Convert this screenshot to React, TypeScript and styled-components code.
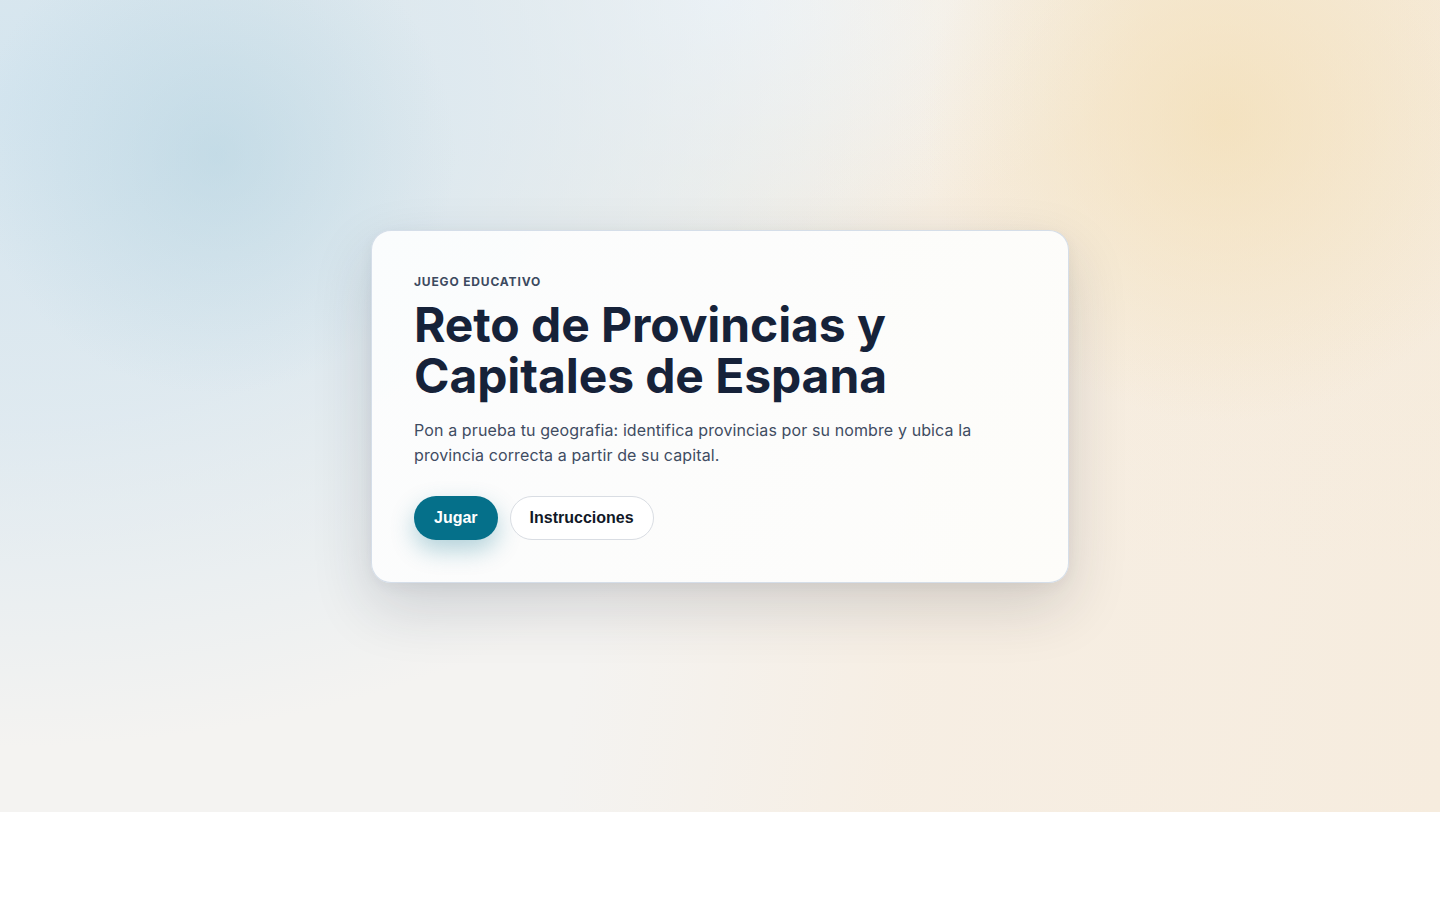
import React from "react";
import styled, { createGlobalStyle } from "styled-components";

const Global = createGlobalStyle`
  html, body { margin: 0; padding: 0; background: #ffffff; }
  body { font-family: Inter, "Noto Sans", sans-serif; -webkit-font-smoothing: antialiased; }
  * { box-sizing: border-box; }
`;

const Stage = styled.main`
  height: 812px;
  display: flex;
  align-items: center;
  justify-content: center;
  background:
    radial-gradient(circle at 15% 19%, rgba(170, 205, 220, 0.45) 0, rgba(170, 205, 220, 0) 240px),
    radial-gradient(circle at 85% 15%, rgba(243, 222, 180, 0.7) 0, rgba(243, 222, 180, 0) 300px),
    radial-gradient(ellipse 66% 80% at 0% 12%, rgba(212, 229, 239, 1) 0%, rgba(216, 231, 241, 0.75) 50%, rgba(220, 233, 242, 0) 100%),
    radial-gradient(ellipse 30% 30% at 50% 0%, rgba(244, 247, 250, 0.9) 0%, rgba(244, 247, 250, 0) 100%),
    linear-gradient(180deg, rgba(245, 233, 212, 0.5) 0%, rgba(245, 233, 212, 0) 70%),
    linear-gradient(100deg, rgba(247, 238, 226, 0) 44%, rgba(247, 237, 224, 0.8) 65%, rgba(246, 236, 222, 1) 100%),
    #f4f3f1;
`;

const Card = styled.section`
  width: 698px;
  padding: 42px;
  border-radius: 20px;
  border: 1px solid rgba(210, 220, 232, 0.9);
  background: linear-gradient(120deg, rgba(251, 252, 253, 0.97), rgba(253, 252, 250, 0.97));
  box-shadow: 0 24px 60px rgba(30, 40, 55, 0.16), 0 4px 14px rgba(30, 40, 55, 0.05);
`;

const Eyebrow = styled.p`
  margin: 0;
  font-size: 12px;
  line-height: 18px;
  font-weight: 700;
  letter-spacing: 0.07em;
  text-transform: uppercase;
  color: #3c4a5f;
`;

const Title = styled.h1`
  margin: 8px 0 0;
  font-size: 48px;
  line-height: 51px;
  font-weight: 700;
  letter-spacing: -0.002em;
  color: #162239;
`;

const Lead = styled.p`
  margin: 17px 0 0;
  font-size: 16px;
  line-height: 25px;
  color: #3f4c62;
  letter-spacing: 0.007em;
`;

const Actions = styled.div`
  display: flex;
  gap: 12px;
  margin-top: 28px;
`;

const Button = styled.button<{ $primary?: boolean }>`
  height: 44px;
  padding: 0 ${(p) => (p.$primary ? "20px" : "19px")};
  border-radius: 999px;
  font-family: "Liberation Sans", Arial, sans-serif;
  font-size: 16px;
  font-weight: 700;
  cursor: pointer;
  border: ${(p) => (p.$primary ? "none" : "1px solid #d9dde3")};
  background: ${(p) => (p.$primary ? "#05708a" : "#ffffff")};
  color: ${(p) => (p.$primary ? "#ffffff" : "#111827")};
  box-shadow: ${(p) => (p.$primary ? "0 10px 24px rgba(5, 112, 138, 0.3)" : "none")};
`;

export default function App() {
  return (
    <>
      <Global />
      <Stage>
        <Card>
          <Eyebrow>Juego educativo</Eyebrow>
          <Title>
            Reto de Provincias y
            <br />
            Capitales de Espana
          </Title>
          <Lead>
            Pon a prueba tu geografia: identifica provincias por su nombre y ubica la provincia correcta a partir
            de su capital.
          </Lead>
          <Actions>
            <Button $primary>Jugar</Button>
            <Button>Instrucciones</Button>
          </Actions>
        </Card>
      </Stage>
    </>
  );
}
